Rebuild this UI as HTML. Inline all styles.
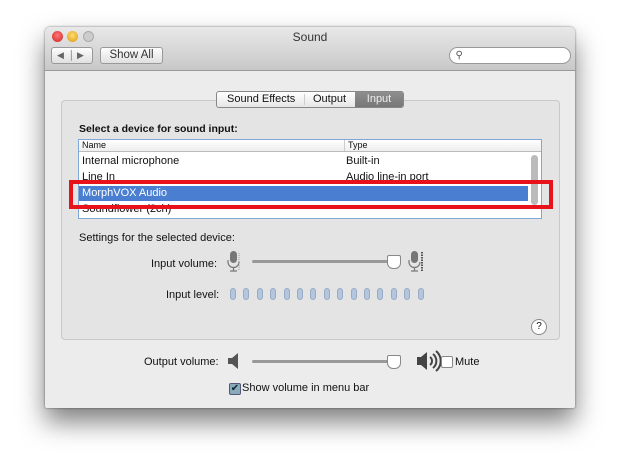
<!DOCTYPE html><html><head><style>
body{margin:0;width:620px;height:472px;background:#fff;font-family:"Liberation Sans",sans-serif;font-size:11px;color:#111;position:relative;overflow:hidden}
.a{position:absolute}
.win{left:45px;top:27px;width:530px;height:381px;background:#ececec;border-radius:5px 5px 2px 2px;box-shadow:0 14px 26px rgba(0,0,0,.5),0 0 2px rgba(0,0,0,.5)}
.tb{left:0;top:0;width:530px;height:43px;background:linear-gradient(#e8e8e8,#c8c8c8);border-bottom:1px solid #999;border-radius:5px 5px 0 0}
.dot{width:11px;height:11px;border-radius:50%;top:4px}
.btn{background:linear-gradient(#fdfdfd,#e0e0e0);border:1px solid #999;border-radius:3px;height:15px}
.lv{position:absolute;top:0;width:6px;height:12px;border-radius:3px;background:#b4c6de;border:1px solid #98aac4;box-sizing:border-box}
</style></head><body>
<div class="a win">
 <div class="a tb">
  <div class="a dot" style="left:7px;background:radial-gradient(circle at 50% 40%,#f77,#c22)"></div>
  <div class="a dot" style="left:22px;background:radial-gradient(circle at 50% 40%,#fd7,#d90)"></div>
  <div class="a dot" style="left:38px;background:#ccc;border:1px solid #aaa;width:9px;height:9px"></div>
  <div class="a" style="left:0;width:530px;top:3px;text-align:center;font-size:12px;color:#333">Sound</div>
  <div class="a btn" style="left:6px;top:20px;width:40px;font-size:9px;color:#666;line-height:15px">&nbsp;&nbsp;◀ &nbsp;│ ▶</div>
  <div class="a btn" style="left:55px;top:20px;width:61px;text-align:center;line-height:15px;font-size:11.5px;color:#333">Show All</div>
  <div class="a" style="left:404px;top:20px;width:120px;height:15px;background:#fff;border:1px solid #999;border-radius:9px;font-size:10px;line-height:15px;color:#555">&nbsp;&nbsp;⚲</div>
 </div>
 <div class="a" style="left:16px;top:73px;width:497px;height:238px;background:#e4e4e4;border:1px solid #c8c8c8;border-radius:4px"></div>
 <div class="a" style="left:171px;top:64px;width:186px;height:15px;border:1px solid #888;border-radius:3px;background:linear-gradient(#fff,#e6e6e6);font-size:11px;line-height:15px">
  <span class="a" style="left:10px">Sound Effects</span><span class="a" style="left:87px;top:2px;height:11px;border-left:1px solid #ccc"></span><span class="a" style="left:96px">Output</span>
  <span class="a" style="left:138px;top:0;width:48px;height:15px;background:linear-gradient(#8e8e8e,#777);color:#eee;text-align:center;border-radius:0 2px 2px 0">Input</span>
 </div>
 <div class="a" style="left:34px;top:96px;font-weight:bold;font-size:10.5px">Select a device for sound input:</div>
 <div class="a" style="left:33px;top:112px;width:462px;height:78px;background:#fff;border:1px solid #7fa7d8;overflow:hidden">
  <div class="a" style="left:0;top:0;width:462px;height:11px;border-bottom:1px solid #bbb;background:linear-gradient(#fff,#eee);font-size:9px;line-height:11px"><span class="a" style="left:3px">Name</span><span class="a" style="left:265px;border-left:1px solid #ccc;padding-left:3px">Type</span></div>
  <div class="a" style="left:3px;top:15px">Internal microphone</div><div class="a" style="left:267px;top:15px">Built-in</div>
  <div class="a" style="left:3px;top:31px">Line In</div><div class="a" style="left:267px;top:31px">Audio line-in port</div>
  <div class="a" style="left:0;top:46px;width:449px;height:15px;background:#4a7ed0;color:#fff;line-height:15px">&nbsp;MorphVOX Audio</div>
  <div class="a" style="left:3px;top:63px">Soundflower (2ch)</div>
  <div class="a" style="left:452px;top:15px;width:7px;height:50px;background:#bbb;border-radius:4px"></div>
 </div>
 <div class="a" style="left:34px;top:205px">Settings for the selected device:</div>
 <div class="a" style="left:106px;top:231px">Input volume:</div>
 <svg class="a" style="left:182px;top:224px" width="14" height="22"><rect x="3" y="0" width="7" height="12" rx="3.5" fill="#777"/><path d="M1 9v2a5.5 5.5 0 0 0 11 0M6.5 16v4M3 20h7" stroke="#777" fill="none" stroke-width="1.2"/><path d="M12 2v17" stroke="#999" stroke-dasharray="1 1"/></svg>
 <svg class="a" style="left:363px;top:224px" width="16" height="22"><rect x="3" y="0" width="7" height="12" rx="3.5" fill="#777"/><path d="M1 9v2a5.5 5.5 0 0 0 11 0M6.5 16v4M3 20h7" stroke="#777" fill="none" stroke-width="1.2"/><path d="M14 1v19" stroke="#222" stroke-width="1.5" stroke-dasharray="1.5 1"/></svg>
 <div class="a" style="left:207px;top:233px;width:143px;height:3px;background:#999;border-radius:2px"></div>
 <div class="a" style="left:342px;top:228px;width:12px;height:12px;background:#fff;border:1px solid #888;border-radius:2px 2px 6px 6px"></div>
 <div class="a" style="left:121px;top:262px">Input level:</div>
 <div class="a" style="left:185px;top:261px;width:200px;height:12px">
  <div class="lv" style="left:0"></div><div class="lv" style="left:13.4px"></div><div class="lv" style="left:26.8px"></div><div class="lv" style="left:40.2px"></div><div class="lv" style="left:53.6px"></div><div class="lv" style="left:67px"></div><div class="lv" style="left:80.4px"></div><div class="lv" style="left:93.8px"></div><div class="lv" style="left:107.2px"></div><div class="lv" style="left:120.6px"></div><div class="lv" style="left:134px"></div><div class="lv" style="left:147.4px"></div><div class="lv" style="left:160.8px"></div><div class="lv" style="left:174.2px"></div><div class="lv" style="left:187.6px"></div>
 </div>
 <div class="a" style="left:486px;top:292px;width:14px;height:14px;border:1px solid #888;border-radius:50%;background:#fff;text-align:center;line-height:14px;font-size:10px">?</div>
 <div class="a" style="left:99px;top:329px">Output volume:</div>
 <svg class="a" style="left:183px;top:326px" width="12" height="16"><path d="M0 5h4l6-5v16l-6-5H0z" fill="#555"/></svg>
 <div class="a" style="left:207px;top:333px;width:143px;height:3px;background:#999;border-radius:2px"></div>
 <div class="a" style="left:342px;top:328px;width:12px;height:12px;background:#fff;border:1px solid #888;border-radius:2px 2px 6px 6px"></div>
 <svg class="a" style="left:372px;top:322px" width="24" height="24"><path d="M0 8h4l6-5v18l-6-5H0z" fill="#444"/><path d="M13 8a5 5 0 0 1 0 8M16 5a9 9 0 0 1 0 14M19 2a13 13 0 0 1 0 20" stroke="#444" stroke-width="2" fill="none"/></svg>
 <div class="a" style="left:396px;top:329px;width:10px;height:10px;border:1px solid #888;background:#fff;border-radius:2px"></div>
 <div class="a" style="left:410px;top:329px">Mute</div>
 <div class="a" style="left:184px;top:356px;width:10px;height:10px;border:1px solid #557;background:#8ab;border-radius:2px;color:#123;font-size:10px;line-height:10px;text-align:center">✔</div>
 <div class="a" style="left:197px;top:355px">Show volume in menu bar</div>
</div>
<div class="a" style="left:69px;top:180px;width:476px;height:21px;border:4px solid #e8131a"></div>
</body></html>
